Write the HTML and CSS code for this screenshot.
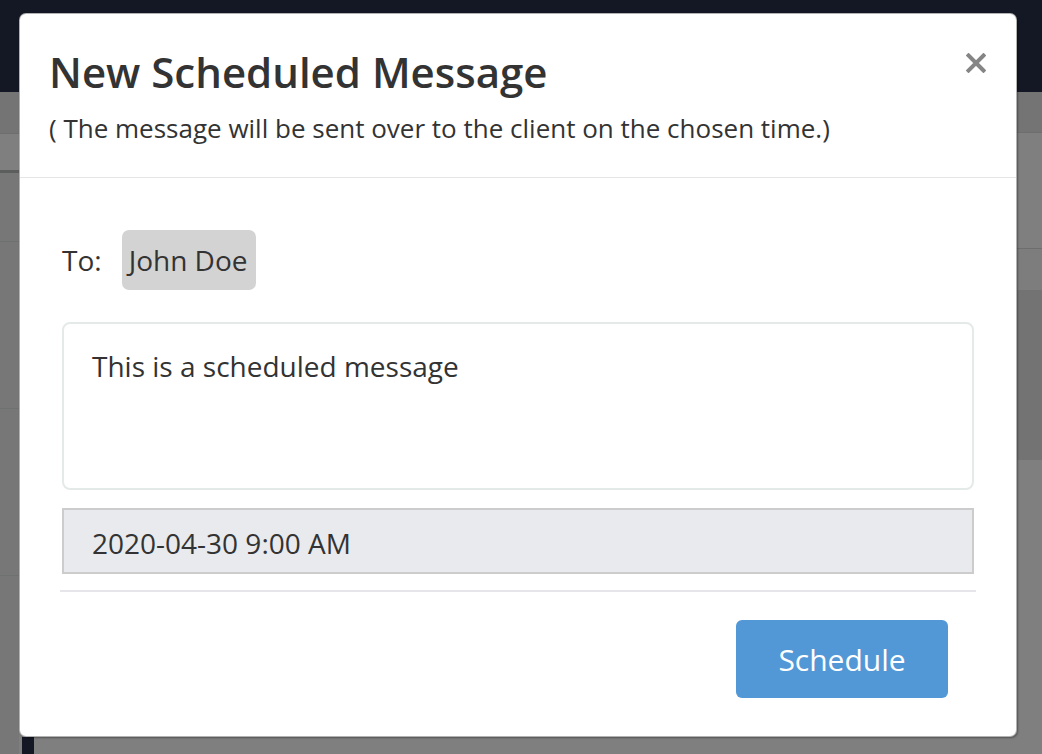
FILE: index.html
```html
<!DOCTYPE html>
<html lang="en">
<head>
<meta charset="utf-8">
<title>New Scheduled Message</title>
<link rel="stylesheet" href="styles.css">
</head>
<body>
<div class="page">
  <header class="topbar"></header>
  <div class="main">
    <aside class="side">
      <div class="side-head"></div>
      <div class="side-sub"></div>
      <div class="side-card">
        <div class="side-item"></div>
        <div class="side-item tall"></div>
        <div class="side-item tall"></div>
      </div>
    </aside>
    <section class="content">
      <div class="row row-head"></div>
      <div class="row row-a"></div>
      <div class="row row-b"></div>
      <div class="row row-dark"></div>
      <div class="row row-fill"></div>
      <div class="row row-foot"><span class="foot-chip"></span></div>
    </section>
  </div>
</div>
<div class="backdrop"></div>
<div class="modal" role="dialog" aria-labelledby="modal-title">
  <div class="modal-header">
    <h1 id="modal-title" class="modal-title">New Scheduled Message</h1>
    <p class="modal-subtitle">( The message will be sent over to the client on the chosen time.)</p>
    <button class="close" type="button" aria-label="Close">
      <svg width="20" height="20" viewBox="0 0 20 20" aria-hidden="true"><path d="M2.5 2.5 L17.5 17.5 M17.5 2.5 L2.5 17.5" stroke="currentColor" stroke-width="4" stroke-linecap="square"/></svg>
    </button>
  </div>
  <div class="modal-body">
    <div class="to-row">
      <span class="to-label">To:</span>
      <span class="recipient">John Doe</span>
    </div>
    <div class="message-box">This is a scheduled message</div>
    <div class="date-box">2020-04-30 9:00 AM</div>
    <hr class="divider">
    <div class="actions">
      <button class="btn-schedule" type="button">Schedule</button>
    </div>
  </div>
</div>
</body>
</html>
```

FILE: styles.css
```css
html, body {
  margin: 0;
  padding: 0;
}
body {
  width: 1042px;
  height: 754px;
  overflow: hidden;
  position: relative;
  font-family: "Open Sans", "Noto Sans", sans-serif;
  color: #333;
  background: #fff;
}
.page {
  display: flex;
  flex-direction: column;
  height: 754px;
}
.topbar {
  height: 92px;
  background: #283048;
  flex: none;
}
.main {
  flex: 1;
  display: flex;
}
.side {
  width: 19px;
  flex: none;
  display: flex;
  flex-direction: column;
  background: #eef0ef;
}
.side-head {
  height: 41px;
  background: #e8e8e8;
  border-bottom: 1px solid #dcdcdc;
}
.side-sub {
  height: 36px;
  background: #fefefe;
}
.side-card {
  flex: 1;
  border-top: 3px solid #b6bcba;
  background: #eceeed;
}
.side-item {
  height: 68px;
  border-bottom: 1px solid #dee2e0;
}
.side-item.tall {
  height: 166px;
}
.content {
  flex: 1;
  display: flex;
  flex-direction: column;
}
.row {
  flex: none;
}
.row-head {
  height: 40px;
  background: #e8e8e8;
  border-bottom: 1px solid #dcdcdc;
}
.row-a {
  height: 115px;
  background: #fefefe;
  border-bottom: 1px solid #dcdcdc;
}
.row-b {
  height: 41px;
  background: #fafafa;
}
.row-dark {
  height: 170px;
  background: #e6e6e6;
}
.row-fill {
  flex: 1;
  background: #fefefe;
}
.row-foot {
  height: 17px;
  background: #fefefe;
  display: flex;
}
.foot-chip {
  margin-left: 3px;
  width: 12px;
  background: #283048;
}
.backdrop {
  position: absolute;
  inset: 0;
  background: rgba(0, 0, 0, 0.5);
}
.modal {
  position: absolute;
  left: 19px;
  top: 13px;
  width: 996px;
  height: 722px;
  background: #fff;
  border: 1px solid rgba(0, 0, 0, 0.3);
  border-radius: 7px;
  box-shadow: 1px 1px 2px rgba(0, 0, 0, 0.35);
  display: flex;
  flex-direction: column;
}
.modal-header {
  position: relative;
  padding: 34px 30px 34px 29px;
  border-bottom: 1px solid #e5e5e5;
}
.modal-title {
  margin: 0;
  font-size: 42px;
  line-height: 48px;
  font-weight: 600;
  color: #333;
}
.modal-subtitle {
  margin: 17px 0 0;
  font-size: 26px;
  line-height: 30px;
  color: #333;
}
.close {
  position: absolute;
  top: 39px;
  right: 30px;
  padding: 0;
  border: 0;
  background: none;
  color: #858585;
  display: flex;
}
.modal-body {
  padding: 52px 40px 0;
  display: flex;
  flex-direction: column;
}
.to-row {
  display: flex;
  align-items: center;
  gap: 20px;
  padding-left: 2px;
  font-size: 28px;
}
.to-label {
  color: #333;
}
.recipient {
  height: 60px;
  line-height: 60px;
  padding: 0 8px 0 7px;
  background: #d3d3d3;
  border-radius: 7px;
  color: #333;
}
.message-box {
  margin: 32px 2px 0;
  height: 168px;
  box-sizing: border-box;
  border: 2px solid #e4eae8;
  border-radius: 8px;
  padding: 20px 28px;
  font-size: 28px;
  line-height: 44px;
  color: #333;
}
.date-box {
  margin: 18px 2px 0;
  height: 66px;
  box-sizing: border-box;
  border: 2px solid #cccccc;
  background: #e9eaee;
  padding: 4px 28px 0;
  font-size: 28px;
  line-height: 58px;
  color: #333;
}
.divider {
  margin: 16px 0 0;
  border: 0;
  border-top: 2px solid #e6e6ea;
}
.actions {
  display: flex;
  justify-content: flex-end;
  padding: 28px 28px 0 0;
}
.btn-schedule {
  width: 212px;
  height: 78px;
  border: 0;
  border-radius: 6px;
  background: #5298d6;
  color: #fff;
  font-family: "Open Sans", "Noto Sans", sans-serif;
  font-size: 30px;
}
```
